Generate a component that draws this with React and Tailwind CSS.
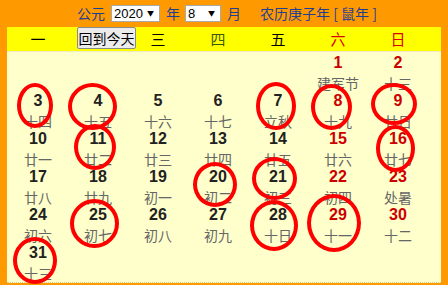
const lunar = [
  "建军节", "十三", "十四", "十五", "十六", "十七", "立秋", "十九", "廿日", "廿一",
  "廿二", "廿三", "廿四", "廿五", "廿六", "廿七", "廿八", "廿九", "初一", "初二",
  "初三", "初四", "处暑", "初六", "初七", "初八", "初九", "十日", "十一", "十二", "十三",
]

const weekdays = [
  { t: "一", c: "text-black" },
  { t: "二", c: "text-black" },
  { t: "三", c: "text-black" },
  { t: "四", c: "text-[#3d5a00]" },
  { t: "五", c: "text-black" },
  { t: "六", c: "text-[#dd0000]" },
  { t: "日", c: "text-[#dd0000]" },
]

// hand drawn red rings over the marked days
const rings = [
  "left-[17px] top-[83px] w-[36px] h-[45px]",
  "left-[68px] top-[83px] w-[49px] h-[47px]",
  "left-[256px] top-[82px] w-[40px] h-[48px]",
  "left-[311px] top-[84px] w-[41px] h-[46px]",
  "left-[371px] top-[83px] w-[46px] h-[42px]",
  "left-[74px] top-[124px] w-[42px] h-[46px]",
  "left-[376px] top-[125px] w-[39px] h-[47px]",
  "left-[193px] top-[162px] w-[44px] h-[45px]",
  "left-[252px] top-[157px] w-[45px] h-[43px]",
  "left-[70px] top-[199px] w-[49px] h-[49px]",
  "left-[250px] top-[200px] w-[48px] h-[51px]",
  "left-[307px] top-[194px] w-[54px] h-[58px]",
  "left-[13px] top-[237px] w-[44px] h-[47px]",
]

function FakeSelect({ value, className }) {
  return (
    <div className={"flex h-[17px] items-center justify-between border border-[#a9a9a9] bg-white pl-[2px] pr-[5px] text-[13px] text-black " + className}>
      <span className="font-['Liberation_Sans',sans-serif]">{value}</span>
      <span className="text-[7px] leading-none">▼</span>
    </div>
  )
}

function App() {

  // Aug 2020 starts on a Saturday
  const cells = []
  for (let i = 0; i < 5; i++) cells.push(null)
  for (let d = 1; d <= 31; d++) cells.push(d)

  return (
    <div className="relative h-[285px] w-[448px] overflow-hidden bg-[#ff9900] font-['Noto_Sans_CJK_SC',sans-serif]">

      {/* TOP BAR */}
      <div className="flex h-[27px] items-center pl-[77px] text-[14px] text-[#1f3f94]">
        <span>公元</span>
        <FakeSelect value="2020" className="ml-[6px] w-[49px]" />
        <span className="ml-[6px]">年</span>
        <FakeSelect value="8" className="ml-[5px] w-[36px]" />
        <span className="ml-[6px]">月</span>
        <span className="ml-[19px]">农历庚子年 [ 鼠年 ]</span>
      </div>

      <div className="mx-[7px] w-[434px]">

        {/* WEEK HEADER */}
        <div className="grid h-[25px] grid-cols-[repeat(7,60px)] border-b border-[#ecebc4] bg-[#ffff00] pl-[1px] text-[15px]">
          {weekdays.map((w, i) =>
            i === 1 ? (
              <div key={i} className="flex items-start">
                <button className="ml-[9px] h-[22px] w-[59px] shrink-0 whitespace-nowrap rounded-[2px] border border-[#8a8a8a] bg-[#ececec] text-[14px] leading-none text-black">
                  回到今天
                </button>
              </div>
            ) : (
              <div key={i} className={"flex items-center justify-center " + w.c}>
                {w.t}
              </div>
            )
          )}
        </div>

        {/* DAYS */}
        <div className="h-[231px] border-b border-dotted border-[#d9cf9a] bg-[#ffffcc] pl-[1px]">
          <div className="grid grid-cols-[repeat(7,60px)] auto-rows-[38px]">
            {cells.map((d, i) => {
              if (!d) return <div key={i} />
              const weekend = i % 7 >= 5
              return (
                <div key={i} className="flex flex-col items-center">
                  <span className={"font-['Liberation_Sans',sans-serif] text-[16px] font-bold leading-[22px] " + (weekend ? "text-[#cc0000]" : "text-[#222]")}>
                    {d}
                  </span>
                  <span className="whitespace-nowrap text-[14px] leading-[18px] text-[#666]">
                    {lunar[d - 1]}
                  </span>
                </div>
              )
            })}
          </div>
        </div>

      </div>

      {/* RINGS */}
      {rings.map((r, i) => (
        <div key={i} className={"pointer-events-none absolute rounded-[50%] border-4 border-[#ff0000] " + r} />
      ))}

    </div>
  )
}

export default App
